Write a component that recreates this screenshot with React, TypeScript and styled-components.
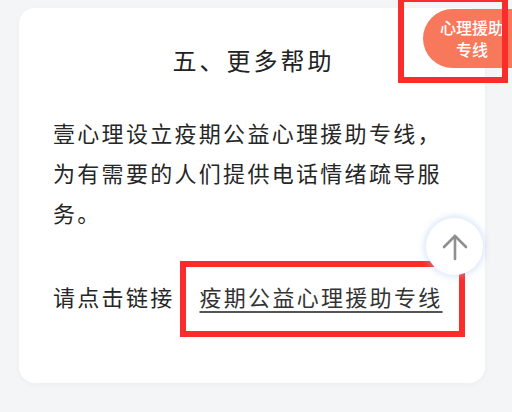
import React from "react";
import styled, { createGlobalStyle } from "styled-components";

const GlobalStyle = createGlobalStyle`
  html, body {
    margin: 0;
    padding: 0;
    background: #f4f5f7;
    font-family: "Noto Sans CJK SC", "Noto Sans", sans-serif;
  }
`;

const Page = styled.div`
  position: relative;
  width: 512px;
  height: 412px;
  overflow: hidden;
  padding: 8px 27px 0 19px;
  box-sizing: border-box;
`;

const Card = styled.section`
  background: #fff;
  border-radius: 16px;
  padding: 32px 34px 67px;
  box-shadow: 0 2px 6px rgba(0, 0, 0, 0.03);
`;

const Heading = styled.h2`
  margin: 0 0 32px;
  padding-left: 3px;
  text-align: center;
  font-size: 24px;
  font-weight: 400;
  line-height: 40px;
  letter-spacing: 3px;
  color: #222;
`;

const Paragraph = styled.p`
  margin: 0;
  font-size: 22px;
  font-weight: 400;
  line-height: 40px;
  letter-spacing: 2.3px;
  color: #262626;
`;

const LinkLine = styled(Paragraph)`
  margin-top: 44px;
  display: flex;
  gap: 26px;
`;

/* red annotation frame drawn around the link, kept out of the line's flow size */
const Highlight = styled.span`
  display: inline-block;
  border: 6px solid #fb2c2c;
  padding: 9px 16px 15px 14px;
  margin: -15px -22px -21px -21px;
`;

const HelpLink = styled.a`
  color: #333;
  text-decoration: underline;
  text-underline-offset: 5px;
  text-decoration-thickness: 1.5px;
  text-decoration-color: #555;
`;

const Badge = styled.div`
  position: absolute;
  top: 9px;
  left: 423px;
  width: 110px;
  height: 59px;
  border-radius: 30px 0 0 30px;
  background: #f8785c;
  color: #fff;
  font-size: 16px;
  font-weight: 500;
  line-height: 22px;
  padding: 7px 0 0 15px;
  box-sizing: border-box;
  display: flex;
  flex-direction: column;
  align-items: flex-start;
  & span {
    width: 68px;
    text-align: center;
  }
`;

const BadgeFrame = styled.div`
  position: absolute;
  left: 398px;
  top: -4px;
  width: 110px;
  height: 87px;
  border: 6px solid #fb2c2c;
  box-sizing: border-box;
  pointer-events: none;
`;

const TopButton = styled.button`
  position: absolute;
  left: 426px;
  top: 218px;
  width: 57px;
  height: 57px;
  border-radius: 50%;
  border: none;
  background: #fff;
  box-shadow: 0 0 6px 2px rgba(170, 200, 240, 0.45);
  display: flex;
  align-items: center;
  justify-content: center;
  padding: 0;
`;

export default function App() {
  return (
    <>
      <GlobalStyle />
      <Page>
        <Card>
          <Heading>五、更多帮助</Heading>
          <Paragraph>
            壹心理设立疫期公益心理援助专线，为有需要的人们提供电话情绪疏导服务。
          </Paragraph>
          <LinkLine>
            <span>请点击链接</span>
            <Highlight>
              <HelpLink href="#">疫期公益心理援助专线</HelpLink>
            </Highlight>
          </LinkLine>
        </Card>
        <Badge>
          <span>心理援助</span>
          <span>专线</span>
        </Badge>
        <TopButton aria-label="回到顶部">
          <svg width="28" height="28" viewBox="0 0 28 28" fill="none" stroke="#8f8f8f" strokeWidth="2.6" strokeLinecap="round" strokeLinejoin="round">
            <path d="M14 26V3" />
            <path d="M3 14L14 3l11 11" />
          </svg>
        </TopButton>
        <BadgeFrame />
      </Page>
    </>
  );
}
